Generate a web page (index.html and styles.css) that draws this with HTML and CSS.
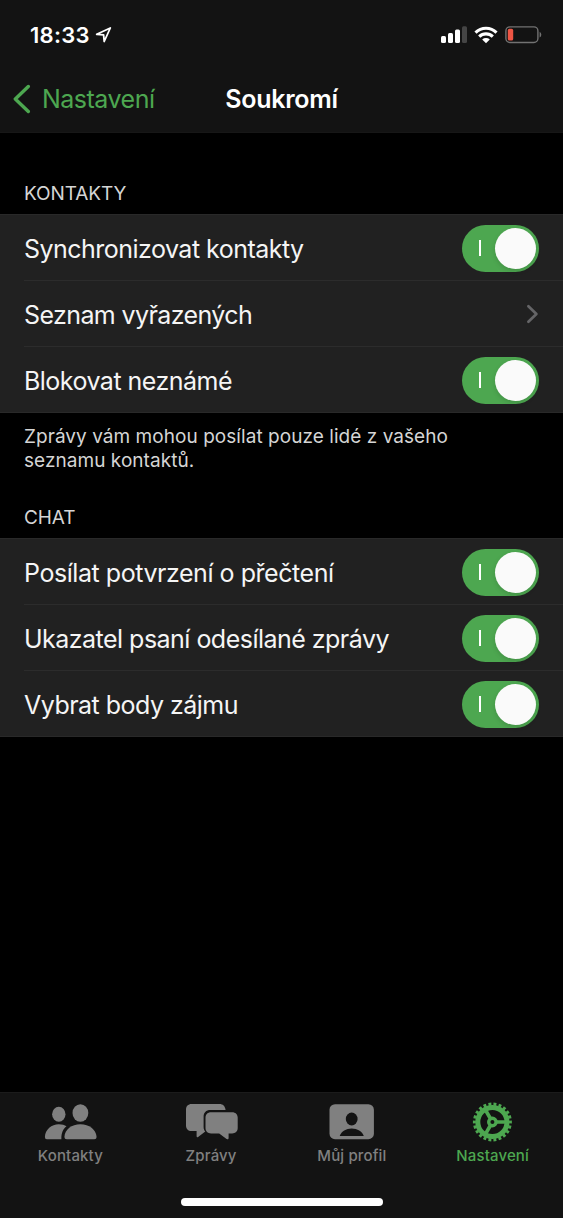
FILE: index.html
```html
<!DOCTYPE html>
<html lang="cs">
<head>
<meta charset="utf-8">
<title>Soukromí</title>
<link rel="stylesheet" href="styles.css">
</head>
<body>
<div class="screen">
  <header class="header">
    <div class="status">
      <span class="time">18:33</span>
      <svg class="location" width="18" height="18" viewBox="0 0 18 18"><path d="M1.7 8.3 15.3 2 9.2 15.5 8.6 8.9Z" fill="none" stroke="#fff" stroke-width="1.8" stroke-linejoin="round"/></svg>
      <svg class="signal" width="27" height="18" viewBox="0 0 27 18"><g fill="#fff"><rect x="0" y="10" width="5" height="7" rx="1.5"/><rect x="7" y="7" width="5" height="10" rx="1.5"/><rect x="14" y="3.5" width="5" height="13.5" rx="1.5"/></g><rect x="21" y="0.3" width="5" height="16.7" rx="1.5" fill="#454545"/></svg>
      <svg class="wifi" width="24" height="18" viewBox="0 0 24 18"><g fill="none" stroke="#fff" stroke-width="3.1"><path d="M1.5 6.6a15 15 0 0 1 21 0"/><path d="M5.2 10.6a9.8 9.8 0 0 1 13.6 0"/></g><path d="M8.2 13.4a5.6 5.6 0 0 1 7.6 0L12 17.3Z" fill="#fff"/></svg>
      <svg class="battery" width="38" height="18" viewBox="0 0 38 18"><rect x="0.9" y="0.9" width="32" height="15.6" rx="4" fill="none" stroke="#727272" stroke-width="1.4"/><path d="M34.6 5.8a3.3 3.3 0 0 1 0 5.8Z" fill="#727272"/><rect x="2.8" y="2.8" width="5.4" height="11.7" rx="1.6" fill="#ee5544"/></svg>
    </div>
    <nav class="navbar">
      <a class="back"><svg width="19" height="30" viewBox="0 0 19 30"><path d="M15.3 2.5 2.3 15 15.3 27.5" fill="none" stroke="#4da750" stroke-width="3.4" stroke-linecap="round" stroke-linejoin="round"/></svg><span>Nastavení</span></a>
      <h1 class="title">Soukromí</h1>
    </nav>
  </header>
  <main class="content">
    <h2 class="section first">KONTAKTY</h2>
    <div class="group">
      <div class="row"><span>Synchronizovat kontakty</span><i class="toggle"></i></div>
      <div class="row"><span class="tight">Seznam vyřazených</span><svg class="chevron" width="13" height="20" viewBox="0 0 13 20"><path d="M2.4 2.2 10.4 10 2.4 17.8" fill="none" stroke="#656567" stroke-width="2.7" stroke-linecap="round" stroke-linejoin="round"/></svg></div>
      <div class="row"><span>Blokovat neznámé</span><i class="toggle"></i></div>
    </div>
    <p class="note">Zprávy vám mohou posílat pouze lidé z vašeho<br>seznamu kontaktů.</p>
    <h2 class="section">CHAT</h2>
    <div class="group">
      <div class="row"><span class="loose">Posílat potvrzení o přečtení</span><i class="toggle"></i></div>
      <div class="row"><span>Ukazatel psaní odesílané zprávy</span><i class="toggle"></i></div>
      <div class="row"><span>Vybrat body zájmu</span><i class="toggle"></i></div>
    </div>
  </main>
  <footer class="footer">
    <div class="tabs">
      <a class="tab"><svg width="54" height="40" viewBox="-.6 0 54 40"><g fill="#808080"><ellipse cx="15.2" cy="12.3" rx="6.7" ry="7.5"/><path d="M3.2 37.2Q1.3 37.2 1.3 35C1.6 27.5 8 22.3 15.2 22.3c3.3 0 5.9.8 7.7 2-3.3 2.7-5.3 6.5-5.1 12.9Z"/><ellipse cx="36.8" cy="11" rx="7.9" ry="8.8"/><path d="M23.2 37.2Q20.8 37.2 20.8 35C21.2 27.5 28 22.3 36.8 22.3S52.4 27.5 53 35q0 2.2-2.3 2.2Z"/></g></svg><span>Kontakty</span></a>
      <a class="tab"><svg width="54" height="40" viewBox="-.6 0 54 40"><g fill="#808080"><path d="M7 2H35c3.2 0 5.5 2 6 6H26c-4.8 0-7 2.7-7 7v10c0 2 .6 3.4 1.7 4.6L13.5 35q-1.5.7-1.5-1V29H7c-3.5 0-5.6-2.2-5.6-5.6V7.6C1.4 4.2 3.5 2 7 2Z"/><path d="M26.5 10.2H47.5c3.4 0 5.6 2.2 5.6 5.4V26c0 3.2-2.2 5.4-5.6 5.4H44V36c0 1.5-1 1.6-2 .9l-7.4-5.5H26.5c-3.4 0-5.6-2.2-5.6-5.4V15.6c0-3.2 2.2-5.4 5.6-5.4Z"/></g></svg><span>Zprávy</span></a>
      <a class="tab"><svg width="54" height="40" viewBox=".5 0 54 40"><rect x="5" y="2.2" width="44.4" height="35" rx="5.5" fill="#808080"/><ellipse cx="27.2" cy="17" rx="5.9" ry="6.5" fill="#131313"/><path d="M15.2 34C17 29.5 21.5 26.6 27.2 26.6S37.5 29.5 39.3 34Z" fill="#131313"/></svg><span>Můj profil</span></a>
      <a class="tab active"><svg width="54" height="40" viewBox="1 0 54 40"><g fill="none" stroke="#4da750"><circle cx="27.4" cy="20" r="14.6" stroke-width="5"/><circle cx="27.4" cy="20" r="18" stroke-width="3" pathLength="44" stroke-dasharray="1.15 .85" stroke-dashoffset=".57"/><circle cx="27.4" cy="20" r="3.7" stroke-width="3.4"/><path d="M32 20H42M25.1 16 20.1 7.4M25.1 24 20.1 32.6" stroke-width="3.7"/></g></svg><span>Nastavení</span></a>
    </div>
    <div class="home"></div>
  </footer>
</div>
</body>
</html>
```
FILE: styles.css
```css
* { box-sizing: border-box; }
body { margin: 0; background: #000; color: #f5f5f5; font-family: Inter, "Liberation Sans", sans-serif; }
h1, h2, p { margin: 0; }
svg { display: block; flex: none; }
.screen { width: 563px; height: 1218px; display: flex; flex-direction: column; overflow: hidden; background: #000; }
.header { height: 133px; background: #131313; border-bottom: 1px solid #171717; }
.status { display: flex; align-items: center; height: 66px; padding: 3px 20px 0 30px; color: #fff; }
.time { font-size: 22px; font-weight: 600; line-height: 28px; letter-spacing: .3px; }
.location { margin-left: 5px; }
.signal { margin-left: auto; }
.wifi { margin-left: 6px; }
.battery { margin-left: 7px; }
.navbar { display: grid; grid-template-columns: 1fr auto 1fr; align-items: center; height: 66px; padding: 0 12.5px; }
.back { display: flex; align-items: center; gap: 10.5px; color: #4da750; font-size: 25px; letter-spacing: -.5px; }
.title { color: #fff; font-size: 25px; font-weight: 600; letter-spacing: -.25px; }
.content { flex: 1; }
.section { height: 56px; padding: 24px 24px 0; color: #d5d5d5; font-size: 19px; line-height: 24px; font-weight: 400; letter-spacing: -.1px; }
.first { height: 81px; padding-top: 49px; }
.group { border-top: 1px solid #292929; border-bottom: 1px solid #292929; background: #212121; padding-left: 24px; }
.row { display: flex; align-items: center; justify-content: space-between; height: 66px; padding: 1px 24px 0 0; border-bottom: 1px solid #2c2c2c; font-size: 25px; line-height: 31px; letter-spacing: -.52px; }
.row:last-child { height: 65px; border-bottom: 0; }
.row span { padding-top: 2px; }
.tight { letter-spacing: -.6px; }
.loose { letter-spacing: -.45px; }
.toggle { position: relative; display: flex; align-items: center; justify-content: flex-end; width: 77px; height: 47px; padding-right: 3px; border-radius: 24px; background: #4da750; }
.toggle::before { content: ""; width: 2px; height: 16px; margin-right: 14px; background: #fff; }
.toggle::after { content: ""; width: 41px; height: 41px; border-radius: 50%; background: #fafafa; box-shadow: 0 2px 5px #0002; }
.note { height: 69px; padding: 12px 24px 0; color: #d5d5d5; font-size: 19px; line-height: 24px; letter-spacing: .05px; }
.footer { height: 126px; background: #131313; border-top: 1px solid #1b1b1b; }
.tabs { display: grid; grid-template-columns: repeat(4, 1fr); height: 105px; padding-top: 9px; }
.tab { display: flex; flex-direction: column; align-items: center; color: #808080; font-size: 15px; font-weight: 500; line-height: 20px; letter-spacing: .15px; gap: 4px; }
.active { color: #4da750; }
.home { width: 202px; height: 8px; margin: 0 auto; border-radius: 4px; background: #fff; }
```
